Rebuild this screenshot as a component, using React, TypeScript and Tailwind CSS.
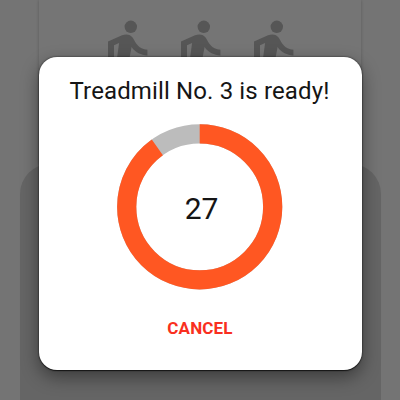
const RADIUS = 73;
const CIRCUMFERENCE = 2 * Math.PI * RADIUS;

function Walker() {
  return (
    <svg className="h-[42px] w-[41px] shrink-0 fill-[#565656]" viewBox="0 0 41 42" aria-hidden="true">
      <circle cx="23.8" cy="6.8" r="6.2" />
      <path d="M1 21.4 L15 15.2 C19.2 13.6 23.6 14.3 25.8 17.8 C28.5 22.4 31.2 29.2 40.4 29.7 V35.5 C34.5 35 28 32.5 24.6 27 L22.7 37 V42 H9.8 L10.2 37 L12.1 23 L7 25.2 V37 H1 Z" />
    </svg>
  );
}

function Countdown({ seconds, total }: { seconds: number; total: number }) {
  return (
    <div className="mt-[17px] grid h-[167px] w-[167px] place-items-center self-center">
      <svg className="col-start-1 row-start-1 h-[167px] w-[167px]" viewBox="0 0 167 167">
        <circle cx="82.7" cy="83.8" r={RADIUS} fill="none" stroke="#bcbcbc" strokeWidth="19.2" />
        <circle
          cx="82.7"
          cy="83.8"
          r={RADIUS}
          fill="none"
          stroke="#ff5722"
          strokeWidth="19.2"
          strokeDasharray={`${(CIRCUMFERENCE * seconds) / total} ${CIRCUMFERENCE}`}
          transform="rotate(-90 82.7 83.8)"
        />
      </svg>
      <span className="col-start-1 row-start-1 pt-[5px] pl-[2px] text-[30px] leading-[34px]">{seconds}</span>
    </div>
  );
}

export default function App() {
  return (
    <div className="relative h-[400px] w-[400px] overflow-hidden bg-[#747474] font-['Roboto',sans-serif] text-[#151515]">
      <div className="flex h-full flex-col items-center">
        <div className="flex h-[164px] w-[322px] shrink-0 justify-center gap-[32px] bg-[#757575] pt-[20px] pl-[1px] shadow-[0_0_3px_rgba(0,0,0,0.22)]">
          <Walker />
          <Walker />
          <Walker />
        </div>
        <div className="h-[236px] w-[361px] shrink-0 rounded-t-[30px] bg-[#656565]" />
      </div>
      <div
        role="dialog"
        className="absolute top-[57px] left-[39px] flex h-[313px] w-[323px] flex-col rounded-[18px] bg-white pt-[19px] shadow-[0_0_2px_rgba(0,0,0,0.75),0_1px_1px_rgba(0,0,0,0.6),0_7px_18px_rgba(0,0,0,0.42)]"
      >
        <h1 className="self-center pr-[2px] text-[24px] leading-[30px] tracking-[0.13px] whitespace-nowrap">
          Treadmill No. 3 is ready!
        </h1>
        <Countdown seconds={27} total={30} />
        <button className="mt-[26px] self-center pr-[1px] text-[17px] leading-[24px] font-bold tracking-[0.15px] text-[#f92f20]">
          CANCEL
        </button>
      </div>
    </div>
  );
}
